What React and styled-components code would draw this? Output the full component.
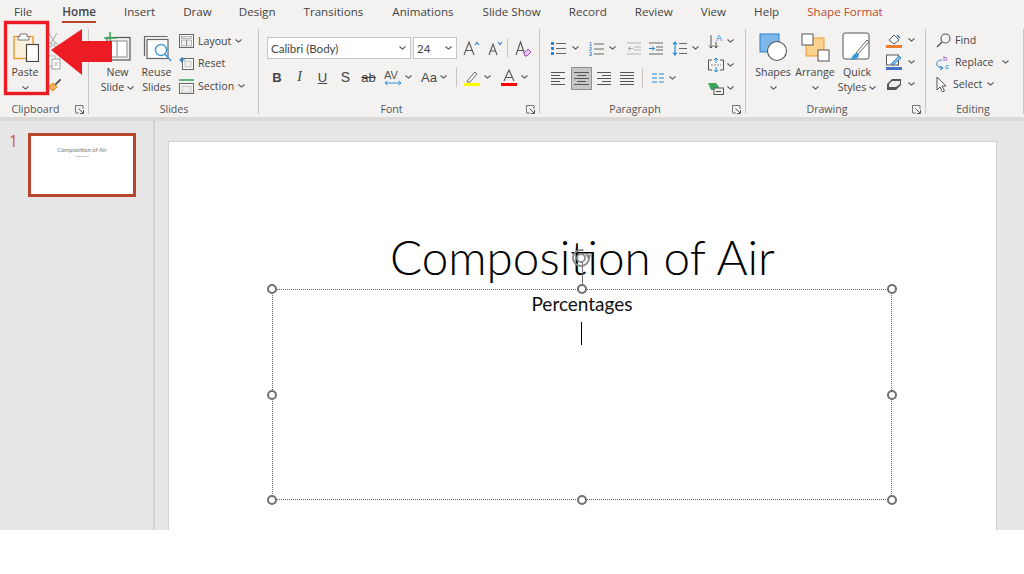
import React from 'react';
import styled, { createGlobalStyle } from 'styled-components';

const GlobalStyle = createGlobalStyle`
  html, body { margin: 0; padding: 0; background: #fff; }
  body { font-family: 'Open Sans', 'Noto Sans', sans-serif; }
`;

const Page = styled.div`
  width: 1024px;
  height: 574px;
  overflow: hidden;
  background: #fff;
`;

const Window = styled.div`
  position: relative;
  height: 530px;
  display: flex;
  flex-direction: column;
  background: #e6e6e6;
  overflow: hidden;
`;

const TabBar = styled.div`
  height: 24px;
  flex: none;
  display: flex;
  align-items: flex-start;
  background: #f3f2f1;
  padding-left: 14px;
  gap: 28px;
`;

const Tab = styled.div`
  position: relative;
  font-size: 11.6px;
  line-height: 24px;
  white-space: nowrap;
  color: ${p => (p.$accent ? '#c0492c' : '#444')};
  margin-left: ${p => p.$shift || 0}px;
  ${p => p.$active && `
    font-weight: 600;
    &::after {
      content: '';
      position: absolute;
      left: 0;
      right: 0;
      top: 21px;
      height: 2px;
      background: #b7472a;
    }
  `}
`;

const Ribbon = styled.div`
  height: 93px;
  flex: none;
  display: flex;
  background: #f3f2f1;
`;

const RibbonShade = styled.div`
  height: 4px;
  flex: none;
  background: #dbdad8;
`;

const Group = styled.div`
  position: relative;
  width: ${p => p.$w}px;
  flex: none;
  display: flex;
  flex-direction: column;
  &::after {
    content: '';
    position: absolute;
    right: 0;
    top: 5px;
    bottom: 3px;
    width: 1px;
    background: #c8c6c4;
  }
`;

const GroupBody = styled.div`
  flex: 1;
  display: flex;
  padding: ${p => p.$pad || '5px 0 0 0'};
  gap: ${p => p.$gap || 0}px;
  min-height: 0;
`;

const GroupFooter = styled.div`
  position: relative;
  height: 16px;
  flex: none;
  box-sizing: border-box;
  padding-right: ${p => p.$pr || 0}px;
  text-align: center;
  font-size: 10.6px;
  line-height: 16px;
  color: #555;
`;

const Launcher = styled.svg`
  position: absolute;
  right: 5px;
  top: 4px;
`;

const LargeButton = styled.div`
  width: ${p => p.$w || 39}px;
  flex: none;
  display: flex;
  flex-direction: column;
  align-items: center;
`;

const IconSlot = styled.div`
  height: 36px;
  flex: none;
  display: flex;
  align-items: center;
  justify-content: center;
`;

const ButtonLine = styled.div`
  display: flex;
  align-items: center;
  gap: 3px;
  height: 15px;
  font-size: 10.6px;
  line-height: 15px;
  color: #444;
  white-space: nowrap;
`;

const SmallColumn = styled.div`
  display: flex;
  flex-direction: column;
  gap: ${p => p.$gap ?? 0}px;
  padding-top: ${p => p.$top || 0}px;
  padding-left: ${p => p.$left || 0}px;
`;

const SmallRow = styled.div`
  display: flex;
  align-items: center;
  height: ${p => p.$h || 22}px;
  gap: ${p => p.$gap ?? 4}px;
  font-size: 10.6px;
  color: #444;
  white-space: nowrap;
`;

const ToolRows = styled.div`
  display: flex;
  flex-direction: column;
`;

const ToolRow = styled.div`
  display: flex;
  align-items: center;
  height: ${p => p.$h}px;
  margin-top: ${p => p.$mt || 0}px;
  padding-left: ${p => p.$pl || 0}px;
`;

const Cell = styled.div`
  width: ${p => p.$w}px;
  height: ${p => p.$h || 22}px;
  flex: none;
  display: flex;
  align-items: center;
  justify-content: ${p => (p.$start ? 'flex-start' : 'center')};
  gap: ${p => p.$gap ?? 0}px;
  box-sizing: border-box;
  margin-right: ${p => p.$mr || 0}px;
  ${p => p.$pressed && 'background: #c6c6c6; border: 1px solid #8f8f8f;'}
`;

const Glyph = styled.span`
  font-family: ${p => (p.$serif ? "'Liberation Serif', serif" : "'Liberation Sans', sans-serif")};
  font-size: ${p => p.$size || 13}px;
  font-weight: ${p => (p.$bold ? 700 : 400)};
  font-style: ${p => (p.$italic ? 'italic' : 'normal')};
  text-decoration: ${p => p.$deco || 'none'};
  color: #444;
  line-height: 1;
`;

const ComboBox = styled.div`
  width: ${p => p.$w}px;
  height: 22px;
  box-sizing: border-box;
  flex: none;
  display: flex;
  align-items: center;
  justify-content: space-between;
  padding: 0 4px 0 3px;
  margin-right: ${p => p.$mr || 0}px;
  background: #fff;
  border: 1px solid #c8c6c4;
  font-family: 'Lato', 'Noto Sans', sans-serif;
  font-size: 11.5px;
  color: #444;
`;

const VDivider = styled.div`
  width: 1px;
  height: 20px;
  flex: none;
  background: #c8c6c4;
  margin: 0 ${p => p.$mr || 0}px 0 ${p => p.$ml || 0}px;
`;

const Annotation = styled.svg`
  position: absolute;
  left: 0;
  top: 0;
  pointer-events: none;
`;

const Workspace = styled.div`
  flex: 1;
  display: flex;
  min-height: 0;
`;

const Sidebar = styled.div`
  width: 155px;
  flex: none;
  display: flex;
  align-items: flex-start;
  padding: 12px 0 0 9px;
  box-sizing: border-box;
  gap: 12px;
  border-right: 2px solid #d2d2d2;
`;

const SlideNumber = styled.div`
  width: 7px;
  font-size: 15.5px;
  line-height: 17px;
  color: #c9563a;
`;

const Thumbnail = styled.div`
  width: 108px;
  height: 64px;
  box-sizing: border-box;
  flex: none;
  display: flex;
  flex-direction: column;
  align-items: center;
  background: #fff;
  border: 3px solid #b7472a;
  padding-top: 10px;
  font-family: 'Lato', sans-serif;
  color: #777;
`;

const ThumbTitle = styled.div`
  font-size: 6px;
  line-height: 8px;
  white-space: nowrap;
`;

const ThumbSub = styled.div`
  font-size: 2.6px;
  line-height: 4px;
  color: #888;
`;

const Stage = styled.div`
  flex: 1;
  padding: 21px 28px 0 14px;
  min-width: 0;
`;

const Slide = styled.div`
  height: 470px;
  display: flex;
  flex-direction: column;
  align-items: center;
  background: #fff;
  box-shadow: 0 0 0 1px #d0d0d0;
  font-family: 'Lato', sans-serif;
  color: #000;
`;

const Title = styled.div`
  margin-top: 86px;
  height: 61px;
  font-size: 47.6px;
  line-height: 58px;
  font-weight: 300;
  white-space: nowrap;
`;

const TextFrame = styled.div`
  position: relative;
  width: 620px;
  height: 211px;
  margin-right: 1px;
  box-sizing: border-box;
  outline: 1px dotted #666;
  outline-offset: -1px;
  padding-top: 1px;
  text-align: center;
`;

const Subtitle = styled.div`
  font-size: 19px;
  line-height: 28px;
  color: #111;
`;

const Caret = styled.div`
  width: 1px;
  height: 23px;
  background: #000;
  margin: 4px 0 0 309px;
`;

const Handle = styled.div`
  position: absolute;
  left: ${p => p.$x}%;
  top: ${p => p.$y}%;
  width: 10px;
  height: 10px;
  box-sizing: border-box;
  margin: -5px 0 0 -5px;
  border: 2px solid #707070;
  border-radius: 50%;
  background: #fff;
`;

const RotateStem = styled.div`
  position: absolute;
  left: 310px;
  top: -28px;
  width: 1px;
  height: 28px;
  background: #707070;
`;

const RotateIcon = styled.svg`
  position: absolute;
  left: 298px;
  top: -42px;
`;

const Chev = ({ c = '#555' }) => (
  <svg width="7" height="4" viewBox="0 0 7 4" style={{ flex: 'none' }}>
    <path d="M.5.5l3 2.6 3-2.6" fill="none" stroke={c} strokeWidth="1.1" />
  </svg>
);

const Ico = ({ w, h = w, children }) => (
  <svg width={w} height={h} viewBox={`0 0 ${w} ${h}`} style={{ flex: 'none' }}>{children}</svg>
);

const LaunchIcon = () => (
  <Launcher width="9" height="9" viewBox="0 0 9 9">
    <path d="M.5 4V.5h7.5V4M.5.5v7.5H4" fill="none" stroke="#777" />
    <path d="M3.5 3.5l4.5 4.5M8.5 5v3.5H5" fill="none" stroke="#555" />
  </Launcher>
);

const PasteIcon = () => (
  <Ico w={28} h={30}>
    <rect x="3" y="4.5" width="19" height="22" fill="#faf0dc" stroke="#ed9b33" strokeWidth="1.4" />
    <path d="M9 4.5V2h7v2.5h2V8H7V4.5z" fill="#fff" stroke="#777" />
    <rect x="15.5" y="12.5" width="12" height="17" fill="#fff" stroke="#444" strokeWidth="1.2" />
  </Ico>
);

const ScissorsIcon = () => (
  <Ico w={12} h={16}>
    <path d="M2 1l6 10M10 1L4 11" stroke="#a9a9a9" fill="none" />
    <circle cx="3" cy="13" r="2" fill="none" stroke="#a9a9a9" />
    <circle cx="9" cy="13" r="2" fill="none" stroke="#a9a9a9" />
  </Ico>
);

const CopyIcon = () => (
  <Ico w={14} h={15}>
    <rect x="1" y="1" width="7" height="10" fill="#fff" stroke="#b5b5b5" />
    <rect x="5" y="4" width="8" height="10" fill="#fff" stroke="#a0a0a0" />
    <path d="M7 8h4M7 10h4" stroke="#b5b5b5" />
  </Ico>
);

const BrushIcon = () => (
  <Ico w={15} h={15}>
    <path d="M1 10l5-4 4 4-4 4z" fill="#f2b05a" stroke="#e08a20" />
    <path d="M8 7l5-5 1 1-5 5z" fill="#666" stroke="#444" strokeWidth=".6" />
  </Ico>
);

const NewSlideIcon = () => (
  <Ico w={30} h={30}>
    <rect x="4" y="5.5" width="23" height="22.5" fill="#f3f2f1" stroke="#555" strokeWidth="1.2" />
    <rect x="7" y="9" width="17" height="16" fill="#fff" stroke="#8a8a8a" />
    <path d="M14 9v16" stroke="#8a8a8a" />
    <path d="M7 0v12M1 6h13" stroke="#3ca85a" strokeWidth="1.6" />
  </Ico>
);

const ReuseIcon = () => (
  <Ico w={30} h={30}>
    <path d="M2.5 24V4.5h23" fill="none" stroke="#666" strokeWidth="1.2" />
    <rect x="5" y="7.5" width="21" height="19" fill="#fff" stroke="#666" strokeWidth="1.2" />
    <circle cx="19" cy="18" r="5.5" fill="#fff" stroke="#3d9ad8" strokeWidth="1.4" />
    <path d="M23 22l6 7" stroke="#3d9ad8" strokeWidth="1.5" />
  </Ico>
);

const LayoutIcon = () => (
  <Ico w={15} h={14}>
    <rect x=".5" y=".5" width="14" height="13" fill="#fff" stroke="#666" />
    <rect x="2.5" y="2.5" width="10" height="2" fill="#eee" stroke="#888" strokeWidth=".6" />
    <rect x="2.5" y="6" width="10" height="6" fill="#eee" stroke="#888" strokeWidth=".6" />
    <path d="M7.5 6v6" stroke="#888" />
  </Ico>
);

const ResetIcon = () => (
  <Ico w={15} h={14}>
    <rect x="3.5" y="2.5" width="11" height="11" fill="#fff" stroke="#666" />
    <rect x="6" y="5" width="6" height="6" fill="#eee" stroke="#999" strokeWidth=".6" />
    <path d="M6 4H2M3.5 1.5L1 4l2.5 2.5" fill="none" stroke="#2a7fc9" strokeWidth="1.2" />
  </Ico>
);

const SectionIcon = () => (
  <Ico w={15} h={15}>
    <path d="M0 1h15" stroke="#3ca85a" strokeWidth="1.6" />
    <rect x=".5" y="4.5" width="14" height="10" fill="#fff" stroke="#666" />
    <rect x="3" y="7" width="9" height="7" fill="#eee" stroke="#999" strokeWidth=".6" />
  </Ico>
);

const GrowIcon = ({ up }) => (
  <Ico w={up ? 17 : 16} h={16}>
    <path d={up ? 'M1 15L6 2l5 13M3 10.5h6' : 'M2 15L6 4l4 11M3.5 11h5'} fill="none" stroke="#555" strokeWidth="1.1" />
    <path d={up ? 'M12 5l2-2.5L16 5' : 'M11 2l2 2.5L15 2'} fill="none" stroke="#2a7fc9" strokeWidth="1.1" />
  </Ico>
);

const ClearIcon = () => (
  <Ico w={17} h={17}>
    <path d="M1 15L5.5 2 10 15M2.8 10.5h5.6" fill="none" stroke="#555" strokeWidth="1.1" />
    <path d="M9 13l4-4 3 3-4 4h-2z" fill="#e3c8ee" stroke="#9c4fb8" />
  </Ico>
);

const SpacingIcon = () => (
  <Ico w={18} h={17}>
    <text x="0" y="10" fontFamily="'Liberation Sans', sans-serif" fontSize="11" fill="#555">AV</text>
    <path d="M1 14h16M3.5 12L1 14l2.5 2M14.5 12l2.5 2-2.5 2" fill="none" stroke="#2a8fd8" />
  </Ico>
);

const HighlightIcon = () => (
  <Ico w={16} h={17}>
    <path d="M4 11l7-8 2 2-7 8H3z" fill="#fff" stroke="#666" />
    <rect x="0" y="14" width="16" height="3.4" fill="#ffff00" />
  </Ico>
);

const FontColorIcon = () => (
  <Ico w={16} h={17}>
    <path d="M3 12L8 1l5 11M5 8.5h6" fill="none" stroke="#555" strokeWidth="1.1" />
    <rect x="0" y="14" width="16" height="3.4" fill="#f00" />
  </Ico>
);

const BulletsIcon = () => (
  <Ico w={16} h={14}>
    <path d="M1 1h3v3H1zM1 6h3v3H1zM1 11h3v3H1z" fill="#1f8ad8" />
    <path d="M6 2.5h10M6 7.5h10M6 12.5h10" stroke="#666" />
  </Ico>
);

const NumberingIcon = () => (
  <Ico w={16} h={15}>
    <text fontFamily="'Liberation Sans', sans-serif" fontSize="5.4" fill="#1f8ad8" fontWeight="700">
      <tspan x="1" y="5">1</tspan>
      <tspan x="1" y="10">2</tspan>
      <tspan x="1" y="15">3</tspan>
    </text>
    <path d="M6 3h10M6 8h10M6 13h10" stroke="#666" />
  </Ico>
);

const IndentIcon = ({ more }) => (
  <Ico w={14} h={13}>
    <path d="M0 1h14M7 5h7M7 8h7M0 12h14" stroke={more ? '#666' : '#b5b5b5'} />
    <path d={more ? 'M0 6.5h5M3 4.5l2.5 2-2.5 2' : 'M1 6.5h5M3.5 4.5L1 6.5l2.5 2'} fill="none" stroke={more ? '#1f8ad8' : '#aaa'} />
  </Ico>
);

const LineSpacingIcon = () => (
  <Ico w={15} h={15}>
    <path d="M3 1v13M1 3.5L3 1l2 2.5M1 11.5L3 14l2-2.5" fill="none" stroke="#1f8ad8" strokeWidth="1.2" />
    <path d="M7 2.5h8M7 7.5h8M7 12.5h8" stroke="#666" />
  </Ico>
);

const TextDirIcon = () => (
  <Ico w={16} h={17}>
    <text x="8" y="8" fontFamily="'Liberation Sans', sans-serif" fontSize="9" fill="#1f8ad8">A</text>
    <path d="M3 2v13M1 12.5L3 15l2-2.5M8 9v6M6 12.5L8 15l2-2.5" fill="none" stroke="#555" />
  </Ico>
);

const AlignTextIcon = () => (
  <Ico w={16} h={16}>
    <path d="M4 3H.5v10H4M12 3h3.5v10H12" fill="none" stroke="#555" />
    <path d="M3 8h10" stroke="#888" strokeDasharray="2 1" />
    <path d="M8 1v5M6 3l2-2 2 2M8 10v5M6 13l2 2 2-2" fill="none" stroke="#1f8ad8" />
  </Ico>
);

const SmartArtIcon = () => (
  <Ico w={16} h={13}>
    <path d="M0 1h8l3 4-1 3H3z" fill="#3ca85a" />
    <rect x="6" y="6" width="9.5" height="6.5" fill="#eee" stroke="#555" />
    <path d="M8 9.5h5" stroke="#555" />
  </Ico>
);

const AlignIcon = ({ kind }) => {
  const short = kind === 'left' ? 'M0 4.5h9M0 10.5h9' : kind === 'center' ? 'M3 4.5h9M3 10.5h9' : kind === 'right' ? 'M5 4.5h9M5 10.5h9' : 'M0 4.5h14M0 10.5h14';
  const wide = kind === 'center' ? 'M0 1.5h15M0 7.5h15M0 13.5h15' : 'M0 1.5h14M0 7.5h14M0 13.5h14';
  return (
    <Ico w={kind === 'center' ? 15 : 14} h={15}>
      <path d={wide} stroke="#555" />
      <path d={short} stroke="#555" />
    </Ico>
  );
};

const ColumnsIcon = () => (
  <Ico w={12} h={10}>
    <path d="M0 1h5M7 1h5M0 5h5M7 5h5M0 9h5M7 9h5" stroke="#1f8ad8" />
  </Ico>
);

const ShapesIcon = () => (
  <Ico w={29} h={29}>
    <rect x="1" y="1" width="19" height="18" fill="#7db8ea" stroke="#2a7fc9" />
    <circle cx="18" cy="18" r="9.5" fill="#fff" stroke="#555" strokeWidth="1.1" />
  </Ico>
);

const ArrangeIcon = () => (
  <Ico w={29} h={29}>
    <rect x="5" y="5" width="18" height="18" fill="#fbd38d" stroke="#ed9b33" />
    <rect x="1" y="1" width="11" height="11" fill="#fff" stroke="#555" />
    <rect x="17" y="17" width="11" height="11" fill="#fff" stroke="#555" />
  </Ico>
);

const QuickStylesIcon = () => (
  <Ico w={30} h={30}>
    <rect x="1" y="1" width="26" height="26" rx="2" fill="#fff" stroke="#555" />
    <path d="M14 21l11-13 2 2-11 12z" fill="#fff" stroke="#666" />
    <path d="M9 28c1-4 3-7 6-7l2 2c0 3-4 5-8 5z" fill="#3d9ad8" />
  </Ico>
);

const FillIcon = () => (
  <Ico w={16} h={15}>
    <path d="M3 7l5-5 5 5-5 4z" fill="#fff" stroke="#555" />
    <path d="M11 2l3 3" stroke="#2a7fc9" strokeWidth="1.5" />
    <rect x="0" y="12" width="16" height="3" fill="#ed7d31" />
  </Ico>
);

const LineIcon = () => (
  <Ico w={16} h={16}>
    <rect x=".5" y="1" width="12" height="10" fill="#fff" stroke="#555" />
    <path d="M5 10l8-8 2 2-8 7z" fill="#8ec3ee" stroke="#2a7fc9" />
    <rect x="0" y="13" width="16" height="3" fill="#4472c4" />
  </Ico>
);

const EffectsIcon = () => (
  <Ico w={16} h={13}>
    <path d="M1 6l5-5h9v6l-5 5H1z" fill="#555" />
    <path d="M3 6l3-3h8v3l-4 3H3z" fill="#eee" />
  </Ico>
);

const FindIcon = () => (
  <Ico w={15} h={15}>
    <circle cx="9.5" cy="5.5" r="4.5" fill="none" stroke="#555" strokeWidth="1.1" />
    <path d="M6 9l-5 5" stroke="#555" strokeWidth="1.5" />
  </Ico>
);

const ReplaceIcon = () => (
  <Ico w={15} h={16}>
    <text x="7" y="7" fontFamily="'Liberation Sans', sans-serif" fontSize="8" fill="#9c4fb8">b</text>
    <text x="9" y="15" fontFamily="'Liberation Sans', sans-serif" fontSize="8" fill="#2a7fc9">c</text>
    <path d="M6 6C2 6 0 9 1 11s3 3 6 3M4 12l3 2-3 2" fill="none" stroke="#2a7fc9" />
  </Ico>
);

const SelectIcon = () => (
  <Ico w={12} h={16}>
    <path d="M1 1l9 9H6l2.5 5-2 1L4 11l-3 3z" fill="#fff" stroke="#555" />
  </Ico>
);

const tabs = [
  ['File', 0], ['Home', 2], ['Insert', 0], ['Draw', 0], ['Design', -1], ['Transitions', 0],
  ['Animations', 1], ['Slide Show', 1], ['Record', 0], ['Review', 0], ['View', 0], ['Help', 0], ['Shape Format', 0],
];

const handles = [[0, 0], [50, 0], [100, 0], [0, 50], [100, 50], [0, 100], [50, 100], [100, 100]];

export default function App() {
  return (
    <Page>
      <GlobalStyle />
      <Window>
        <TabBar>
          {tabs.map(([name, shift]) => (
            <Tab key={name} $shift={shift} $active={name === 'Home'} $accent={name === 'Shape Format'}>{name}</Tab>
          ))}
        </TabBar>

        <Ribbon>
          <Group $w={89}>
            <GroupBody $pad="5px 0 0 6px" $gap={3}>
              <LargeButton $w={38}>
                <IconSlot><PasteIcon /></IconSlot>
                <ButtonLine>Paste</ButtonLine>
                <ButtonLine><Chev /></ButtonLine>
              </LargeButton>
              <SmallColumn $top={3} $gap={7}>
                <ScissorsIcon />
                <CopyIcon />
                <BrushIcon />
              </SmallColumn>
            </GroupBody>
            <GroupFooter $pr={18}>Clipboard<LaunchIcon /></GroupFooter>
          </Group>

          <Group $w={170}>
            <GroupBody $pad="5px 0 0 9px">
              <LargeButton>
                <IconSlot><NewSlideIcon /></IconSlot>
                <ButtonLine>New</ButtonLine>
                <ButtonLine>Slide <Chev /></ButtonLine>
              </LargeButton>
              <LargeButton>
                <IconSlot><ReuseIcon /></IconSlot>
                <ButtonLine>Reuse</ButtonLine>
                <ButtonLine>Slides</ButtonLine>
              </LargeButton>
              <SmallColumn $top={1} $left={3}>
                <SmallRow $gap={4}><LayoutIcon />Layout <Chev /></SmallRow>
                <SmallRow $gap={4}><ResetIcon />Reset</SmallRow>
                <SmallRow $gap={4} $h={24}><SectionIcon />Section <Chev /></SmallRow>
              </SmallColumn>
            </GroupBody>
            <GroupFooter>Slides</GroupFooter>
          </Group>

          <Group $w={281}>
            <GroupBody $pad="13px 0 0 7px">
              <ToolRows>
                <ToolRow $h={22} $pl={1}>
                  <ComboBox $w={144} $mr={2}>Calibri (Body)<Chev /></ComboBox>
                  <ComboBox $w={44} $mr={6}>24<Chev /></ComboBox>
                  <Cell $w={17} $mr={7}><GrowIcon up /></Cell>
                  <Cell $w={16} $mr={4}><GrowIcon /></Cell>
                  <VDivider $mr={7} />
                  <Cell $w={17}><ClearIcon /></Cell>
                </ToolRow>
                <ToolRow $h={22} $mt={7}>
                  <Cell $w={22}><Glyph $bold>B</Glyph></Cell>
                  <Cell $w={23}><Glyph $serif $italic $size={14}>I</Glyph></Cell>
                  <Cell $w={23}><Glyph $deco="underline">U</Glyph></Cell>
                  <Cell $w={23}><Glyph $size={14}>S</Glyph></Cell>
                  <Cell $w={23}><Glyph $deco="line-through">ab</Glyph></Cell>
                  <Cell $w={35} $gap={3}><SpacingIcon /><Chev /></Cell>
                  <Cell $w={38} $gap={3}><Glyph>Aa</Glyph><Chev /></Cell>
                  <VDivider $ml={3} $mr={6} />
                  <Cell $w={28} $gap={4}><HighlightIcon /><Chev /></Cell>
                  <Cell $w={9} />
                  <Cell $w={28} $gap={4}><FontColorIcon /><Chev /></Cell>
                </ToolRow>
              </ToolRows>
            </GroupBody>
            <GroupFooter $pr={16}>Font<LaunchIcon /></GroupFooter>
          </Group>

          <Group $w={206}>
            <GroupBody $pad="5px 0 0 10px" $gap={6}>
              <ToolRows>
                <ToolRow $h={22} $mt={8}>
                  <Cell $w={38} $gap={6} $start><BulletsIcon /><Chev /></Cell>
                  <Cell $w={39} $gap={5} $start><NumberingIcon /><Chev /></Cell>
                  <Cell $w={22} $start><IndentIcon /></Cell>
                  <Cell $w={23} $start><IndentIcon more /></Cell>
                  <Cell $w={30} $gap={5} $start><LineSpacingIcon /><Chev /></Cell>
                </ToolRow>
                <ToolRow $h={24} $mt={7}>
                  <Cell $w={16} $h={23} $mr={5}><AlignIcon kind="left" /></Cell>
                  <Cell $w={21} $h={23} $mr={5} $pressed><AlignIcon kind="center" /></Cell>
                  <Cell $w={14} $h={23} $mr={9}><AlignIcon kind="right" /></Cell>
                  <Cell $w={14} $h={23}><AlignIcon kind="justify" /></Cell>
                  <VDivider $ml={8} $mr={9} />
                  <Cell $w={24} $gap={5}><ColumnsIcon /><Chev /></Cell>
                </ToolRow>
              </ToolRows>
              <SmallColumn>
                <SmallRow $gap={3} $h={24}><TextDirIcon /><Chev /></SmallRow>
                <SmallRow $gap={3} $h={23}><AlignTextIcon /><Chev /></SmallRow>
                <SmallRow $gap={3} $h={24}><SmartArtIcon /><Chev /></SmallRow>
              </SmallColumn>
            </GroupBody>
            <GroupFooter $pr={16}>Paragraph<LaunchIcon /></GroupFooter>
          </Group>

          <Group $w={180}>
            <GroupBody $pad="5px 0 0 6px">
              <LargeButton $w={42}>
                <IconSlot><ShapesIcon /></IconSlot>
                <ButtonLine>Shapes</ButtonLine>
                <ButtonLine><Chev /></ButtonLine>
              </LargeButton>
              <LargeButton $w={42}>
                <IconSlot><ArrangeIcon /></IconSlot>
                <ButtonLine>Arrange</ButtonLine>
                <ButtonLine><Chev /></ButtonLine>
              </LargeButton>
              <LargeButton $w={42}>
                <IconSlot><QuickStylesIcon /></IconSlot>
                <ButtonLine>Quick</ButtonLine>
                <ButtonLine>Styles <Chev /></ButtonLine>
              </LargeButton>
              <SmallColumn $left={8}>
                <SmallRow $gap={6}><FillIcon /><Chev /></SmallRow>
                <SmallRow $gap={6}><LineIcon /><Chev /></SmallRow>
                <SmallRow $gap={6}><EffectsIcon /><Chev /></SmallRow>
              </SmallColumn>
            </GroupBody>
            <GroupFooter $pr={18}>Drawing<LaunchIcon /></GroupFooter>
          </Group>

          <Group $w={98}>
            <GroupBody $pad="5px 0 0 10px">
              <SmallColumn>
                <SmallRow $gap={4}><FindIcon />Find</SmallRow>
                <SmallRow $gap={4}><ReplaceIcon />Replace<Cell $w={16}><Chev /></Cell></SmallRow>
                <SmallRow $gap={5}><SelectIcon />Select <Chev /></SmallRow>
              </SmallColumn>
            </GroupBody>
            <GroupFooter $pr={4}>Editing</GroupFooter>
          </Group>
        </Ribbon>
        <RibbonShade />

        <Workspace>
          <Sidebar>
            <SlideNumber>1</SlideNumber>
            <Thumbnail>
              <ThumbTitle>Composition of Air</ThumbTitle>
              <ThumbSub>Percentages</ThumbSub>
            </Thumbnail>
          </Sidebar>
          <Stage>
            <Slide>
              <Title>Composition of Air</Title>
              <TextFrame>
                <Subtitle>Percentages</Subtitle>
                <Caret />
                <RotateStem />
                <RotateIcon width="22" height="22" viewBox="0 0 22 22">
                  <circle cx="11" cy="11" r="8" fill="none" stroke="#8a8a8a" strokeWidth="2" strokeDasharray="40 10" />
                  <circle cx="11" cy="11" r="4" fill="none" stroke="#8a8a8a" strokeWidth="1.8" />
                  <path d="M15 7l6 1-2 5z" fill="#8a8a8a" />
                </RotateIcon>
                {handles.map(([x, y]) => <Handle key={`${x}-${y}`} $x={x} $y={y} />)}
              </TextFrame>
            </Slide>
          </Stage>
        </Workspace>

        <Annotation width="120" height="100" viewBox="0 0 120 100">
          <rect x="5.5" y="22.5" width="42" height="71" fill="none" stroke="#ed1c24" strokeWidth="3.4" />
          <path d="M51 50L82 29v12h30v21H82v13z" fill="#ed1c24" />
        </Annotation>
      </Window>
    </Page>
  );
}
